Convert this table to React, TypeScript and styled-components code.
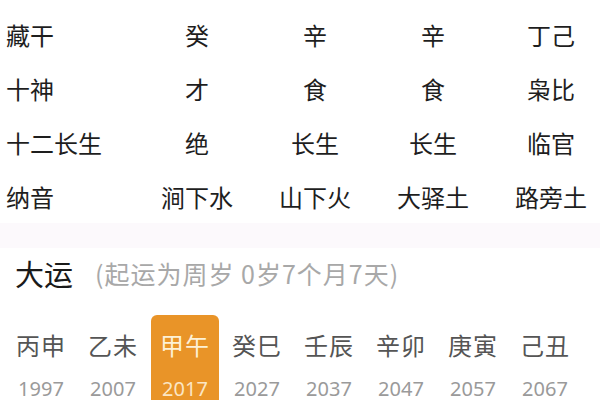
import React from "react";
import styled, { createGlobalStyle } from "styled-components";

const Global = createGlobalStyle`
  html, body { margin: 0; padding: 0; background: #fff; overflow: hidden; }
  body { font-family: "Noto Sans CJK SC", "Noto Sans", sans-serif; }
`;

const Page = styled.div`
  width: 600px;
  height: 400px;
  overflow: hidden;
  background: #fff;
`;

const Table = styled.div`
  display: grid;
  grid-template-columns: 138px repeat(4, 118px);
  grid-auto-rows: 54px;
  padding-top: 7px;
  width: 610px;
`;

const Label = styled.div`
  display: flex;
  align-items: center;
  padding-left: 6px;
  font-size: 24px;
  color: #1e1e1e;
  white-space: nowrap;
`;

const Cell = styled.div`
  display: flex;
  align-items: center;
  justify-content: center;
  font-size: 24px;
  color: #1e1e1e;
  white-space: nowrap;
`;

const Divider = styled.div`
  height: 25px;
  background: #fcf9fc;
`;

const Header = styled.div`
  display: flex;
  align-items: center;
  height: 50px;
  padding-left: 15px;
  gap: 22px;
`;

const Title = styled.div`
  font-size: 29px;
  color: #1a1a1a;
`;

const Note = styled.div`
  font-size: 25px;
  color: #a8a8a8;
  letter-spacing: 1px;
  white-space: nowrap;
`;

const Runs = styled.div`
  display: grid;
  grid-template-columns: repeat(8, 72px);
  padding-left: 5px;
  margin-top: 17px;
`;

const Run = styled.div<{ $active?: boolean }>`
  display: flex;
  flex-direction: column;
  align-items: center;
  margin: 0 2px;
  height: 100px;
  border-radius: 6px;
  background: ${(p) => (p.$active ? "#e99428" : "transparent")};
`;

const Pillar = styled.div<{ $active?: boolean }>`
  font-size: 24px;
  line-height: 30px;
  margin-top: 15px;
  color: ${(p) => (p.$active ? "#fdf1d6" : "#555")};
  letter-spacing: 1px;
`;

const Year = styled.div<{ $active?: boolean }>`
  font-family: "Noto Sans", sans-serif;
  font-size: 20px;
  margin-top: 15px;
  color: ${(p) => (p.$active ? "#fbe6c4" : "#9a9a9a")};
`;

const rows: [string, string[]][] = [
  ["藏干", ["癸", "辛", "辛", "丁己"]],
  ["十神", ["才", "食", "食", "枭比"]],
  ["十二长生", ["绝", "长生", "长生", "临官"]],
  ["纳音", ["涧下水", "山下火", "大驿土", "路旁土"]],
];

const runs = [
  ["丙申", "1997"],
  ["乙未", "2007"],
  ["甲午", "2017"],
  ["癸巳", "2027"],
  ["壬辰", "2037"],
  ["辛卯", "2047"],
  ["庚寅", "2057"],
  ["己丑", "2067"],
];

export default function App() {
  return (
    <Page>
      <Global />
      <Table>
        {rows.map(([label, cells]) => (
          <React.Fragment key={label}>
            <Label>{label}</Label>
            {cells.map((c, i) => (
              <Cell key={i}>{c}</Cell>
            ))}
          </React.Fragment>
        ))}
      </Table>
      <Divider />
      <Header>
        <Title>大运</Title>
        <Note>(起运为周岁 0岁7个月7天)</Note>
      </Header>
      <Runs>
        {runs.map(([p, y], i) => (
          <Run key={p} $active={i === 2}>
            <Pillar $active={i === 2}>{p}</Pillar>
            <Year $active={i === 2}>{y}</Year>
          </Run>
        ))}
      </Runs>
    </Page>
  );
}
